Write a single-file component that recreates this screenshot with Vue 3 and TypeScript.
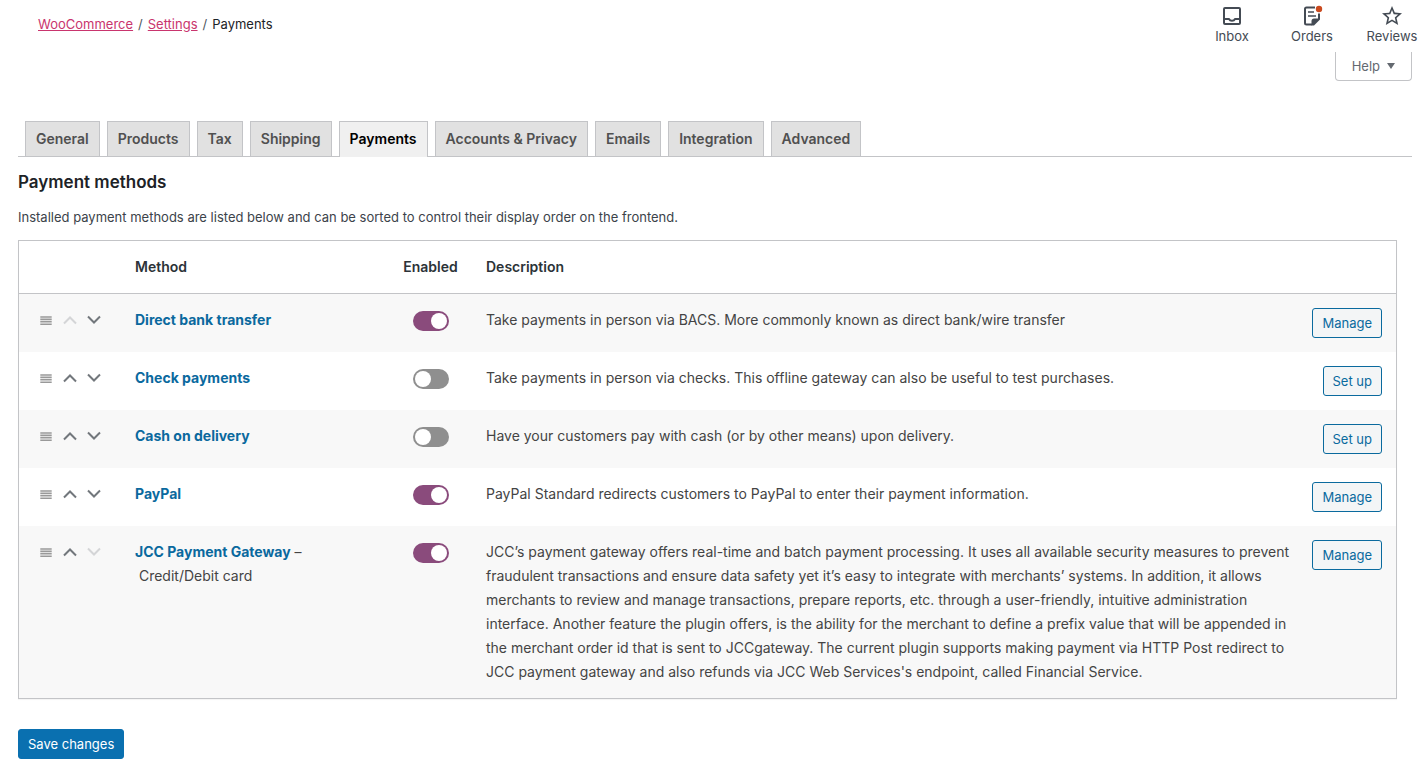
<script setup lang="ts">
import { ref } from 'vue'

interface Gateway {
  id: string
  name: string
  subtitle?: string
  enabled: boolean
  description: string
}

const tabs: string[] = [
  'General',
  'Products',
  'Tax',
  'Shipping',
  'Payments',
  'Accounts & Privacy',
  'Emails',
  'Integration',
  'Advanced',
]
const activeTab = ref('Payments')

const gateways = ref<Gateway[]>([
  {
    id: 'bacs',
    name: 'Direct bank transfer',
    enabled: true,
    description: 'Take payments in person via BACS. More commonly known as direct bank/wire transfer',
  },
  {
    id: 'cheque',
    name: 'Check payments',
    enabled: false,
    description: 'Take payments in person via checks. This offline gateway can also be useful to test purchases.',
  },
  {
    id: 'cod',
    name: 'Cash on delivery',
    enabled: false,
    description: 'Have your customers pay with cash (or by other means) upon delivery.',
  },
  {
    id: 'paypal',
    name: 'PayPal',
    enabled: true,
    description: 'PayPal Standard redirects customers to PayPal to enter their payment information.',
  },
  {
    id: 'jcc',
    name: 'JCC Payment Gateway',
    subtitle: 'Credit/Debit card',
    enabled: true,
    description:
      'JCC’s payment gateway offers real-time and batch payment processing. It uses all available security measures to prevent fraudulent transactions and ensure data safety yet it’s easy to integrate with merchants’ systems. In addition, it allows merchants to review and manage transactions, prepare reports, etc. through a user-friendly, intuitive administration interface. Another feature the plugin offers, is the ability for the merchant to define a prefix value that will be appended in the merchant order id that is sent to JCCgateway. The current plugin supports making payment via HTTP Post redirect to JCC payment gateway and also refunds via JCC Web Services\'s endpoint, called Financial Service.',
  },
])

function move(index: number, step: number): void {
  const target = index + step
  if (target < 0 || target >= gateways.value.length) return
  const [item] = gateways.value.splice(index, 1)
  gateways.value.splice(target, 0, item)
}
</script>

<template>
  <div class="page">
    <header class="topbar">
      <nav class="crumbs" aria-label="Breadcrumb">
        <a href="#woocommerce">WooCommerce</a>
        <span class="sep">/</span>
        <a href="#settings">Settings</a>
        <span class="sep">/</span>
        <span>Payments</span>
      </nav>
      <div class="activity">
        <button type="button" class="activity-btn">
          <svg width="24" height="24" viewBox="0 0 24 24" fill="none" stroke="currentColor" stroke-width="2" stroke-linejoin="round">
            <rect x="4" y="4" width="16" height="16" rx="1" />
            <path d="M4 15h5c.5 1.100 1.600 1.800 3 1.800s2.500-.7 3-1.800h5" />
          </svg>
          <span>Inbox</span>
        </button>
        <button type="button" class="activity-btn">
          <svg width="24" height="24" viewBox="0 0 24 24" fill="none" stroke="currentColor" stroke-width="2">
            <path d="M15 3.500H6.500A1.500 1.500 0 0 0 5 5v14a1.500 1.500 0 0 0 1.500 1.500H12" />
            <path d="M19 9.500V15" />
            <path d="M8 8h6M8 12h8" stroke-width="1.700" />
            <path d="M11.500 21.500V17a2.500 2.500 0 0 1 2.500-2.500h6v1L14 21.500z" fill="currentColor" stroke="none" />
            <circle cx="19" cy="5" r="3.200" fill="#ca4a1f" stroke="none" />
          </svg>
          <span>Orders</span>
        </button>
        <button type="button" class="activity-btn">
          <svg width="24" height="24" viewBox="0 0 24 24" fill="currentColor">
            <path d="M22 9.240l-7.190-.62L12 2 9.190 8.630 2 9.240l5.460 4.730L5.820 21 12 17.270 18.180 21l-1.630-7.030L22 9.240zM12 15.400l-3.760 2.270 1-4.280-3.320-2.880 4.380-.38L12 6.100l1.710 4.040 4.380.38-3.320 2.880 1 4.280L12 15.400z" />
          </svg>
          <span>Reviews</span>
        </button>
      </div>
    </header>

    <div class="help-row">
      <button type="button" class="help">
        <span>Help</span>
        <svg width="8" height="6" viewBox="0 0 8 6" fill="currentColor"><path d="M0 0h8L4 6z" /></svg>
      </button>
    </div>

    <main class="content">
      <nav class="tabs" aria-label="Settings sections">
        <a
          v-for="tab in tabs"
          :key="tab"
          href="#tab"
          class="tab"
          :class="{ active: tab === activeTab }"
          @click.prevent="activeTab = tab"
        >{{ tab }}</a>
      </nav>

      <h2>Payment methods</h2>
      <p class="intro">Installed payment methods are listed below and can be sorted to control their display order on the frontend.</p>

      <table class="gateways">
        <colgroup>
          <col class="col-sort" />
          <col class="col-name" />
          <col class="col-status" />
          <col />
          <col class="col-action" />
        </colgroup>
        <thead>
          <tr>
            <th></th>
            <th>Method</th>
            <th class="status">Enabled</th>
            <th>Description</th>
            <th></th>
          </tr>
        </thead>
        <tbody>
          <tr v-for="(gateway, index) in gateways" :key="gateway.id">
            <td class="sort">
              <div class="sort-tools">
                <svg class="handle" width="24" height="24" viewBox="0 0 24 24" stroke="currentColor" stroke-width="1.600">
                  <path d="M6.300 9h11.400M6.300 11.400h11.400M6.300 13.800h11.400M6.300 16.200h11.400" />
                </svg>
                <button type="button" aria-label="Move up" :disabled="index === 0" @click="move(index, -1)">
                  <svg width="24" height="24" viewBox="0 0 24 24" fill="none" stroke="currentColor" stroke-width="2">
                    <path d="M6 15.500l6-6 6 6" />
                  </svg>
                </button>
                <button type="button" aria-label="Move down" :disabled="index === gateways.length - 1" @click="move(index, 1)">
                  <svg width="24" height="24" viewBox="0 0 24 24" fill="none" stroke="currentColor" stroke-width="2">
                    <path d="M6 8.500l6 6 6-6" />
                  </svg>
                </button>
              </div>
            </td>
            <td>
              <a class="name" :href="'#' + gateway.id">{{ gateway.name }}</a>
              <template v-if="gateway.subtitle">
                <span>&nbsp;–</span>
                <span class="subtitle">&nbsp;{{ gateway.subtitle }}</span>
              </template>
            </td>
            <td class="status">
              <input v-model="gateway.enabled" type="checkbox" class="toggle" :aria-label="'Enable ' + gateway.name" />
            </td>
            <td class="description">{{ gateway.description }}</td>
            <td class="action">
              <button type="button" class="button">{{ gateway.enabled ? 'Manage' : 'Set up' }}</button>
            </td>
          </tr>
        </tbody>
      </table>

      <button type="button" class="button primary">Save changes</button>
    </main>
  </div>
</template>

<style>
body {
  margin: 0;
  background: #fff;
}
</style>

<style scoped>
.page {
  font-family: Inter, 'Liberation Sans', sans-serif;
  font-size: 13px;
  line-height: 20px;
  color: #3c434a;
}

button {
  font-family: inherit;
  cursor: pointer;
}

svg {
  display: block;
}

.topbar {
  display: flex;
  justify-content: space-between;
  height: 52px;
}

.crumbs {
  display: flex;
  gap: 5px;
  padding: 14px 0 0 38px;
  color: #1d2327;
}

.crumbs a {
  color: #c9356e;
  text-underline-offset: 1px;
}

.sep {
  color: #50575e;
}

.activity {
  display: flex;
  gap: 8px;
}

.activity-btn {
  display: flex;
  flex-direction: column;
  align-items: center;
  width: 72px;
  padding: 4px 0 0;
  border: 0;
  background: none;
  color: #444b54;
  font-size: 13px;
  line-height: 16px;
}

.help-row {
  display: flex;
  justify-content: flex-end;
  padding-right: 16px;
}

.help {
  display: flex;
  align-items: center;
  gap: 7px;
  padding: 4px 16px;
  border: 1px solid #c3c4c7;
  border-top: 0;
  border-radius: 0 0 4px 4px;
  background: #fff;
  color: #646970;
  font-size: 13px;
  line-height: 20px;
}

.content {
  padding: 40px 16px 20px 18px;
}

.tabs {
  display: flex;
  gap: 7px;
  padding-left: 7px;
  border-bottom: 1px solid #c3c4c7;
}

.tab {
  padding: 5px 10px;
  border: 1px solid #c3c4c7;
  border-bottom: 0;
  background: #e1e1e1;
  color: #505050;
  font-size: 14px;
  font-weight: 600;
  line-height: 24px;
  text-decoration: none;
}

.tab.active {
  margin-bottom: -1px;
  padding-bottom: 6px;
  background: #f0f0f0;
  color: #000;
}

h2 {
  margin: 13px 0 0;
  color: #1d2327;
  font-size: 17px;
  font-weight: 600;
  line-height: 24px;
}

.intro {
  margin: 13px 0;
}

.gateways {
  width: calc(100% - 15px);
  table-layout: fixed;
  border: 1px solid #c3c4c7;
  border-spacing: 0;
  box-shadow: 0 1px 1px rgba(0, 0, 0, 0.04);
  color: #444;
  font-size: 14px;
  line-height: 24px;
}

.col-sort {
  width: 102px;
}

.col-name {
  width: 268px;
}

.col-status {
  width: 83px;
}

.col-action {
  width: 98px;
}

th,
td {
  padding: 14px;
  text-align: left;
  vertical-align: top;
}

th {
  border-bottom: 1px solid #c3c4c7;
  color: #2c3338;
  font-weight: 600;
}

tbody tr:nth-child(odd) {
  background: #f8f8f8;
}

th.status,
td.status {
  padding-right: 0;
  padding-left: 0;
  text-align: center;
}

td.sort {
  padding-right: 0;
  padding-left: 15px;
}

td.description {
  padding-right: 4px;
}

.sort-tools {
  display: flex;
}

.sort-tools button {
  padding: 0;
  border: 0;
  background: none;
  color: #72777c;
}

.sort-tools button:disabled {
  color: #d4d5d7;
}

.handle {
  color: #999;
}

.name {
  color: #0a699e;
  font-weight: 700;
  text-decoration: none;
}

.subtitle {
  display: block;
}

.toggle {
  display: block;
  box-sizing: border-box;
  width: 36px;
  height: 20px;
  margin: 3px auto 0;
  padding: 2px;
  border-radius: 10px;
  background: #8f8f8f;
  appearance: none;
  cursor: pointer;
}

.toggle::before {
  display: block;
  width: 16px;
  height: 16px;
  border-radius: 50%;
  background: #fff;
  content: '';
}

.toggle:checked {
  background: #8a4b7c;
}

.toggle:checked::before {
  margin-left: auto;
}

td.action {
  padding-left: 0;
  text-align: right;
}

.button {
  display: inline-block;
  padding: 0 9px;
  border: 1px solid #0a6a9e;
  border-radius: 3px;
  background: #f3f5f6;
  color: #0a6a9e;
  font-size: 13px;
  line-height: 28px;
  vertical-align: top;
}

.button.primary {
  margin-top: 30px;
  border-color: #0a70b0;
  background: #0a70b0;
  color: #fff;
}
</style>
